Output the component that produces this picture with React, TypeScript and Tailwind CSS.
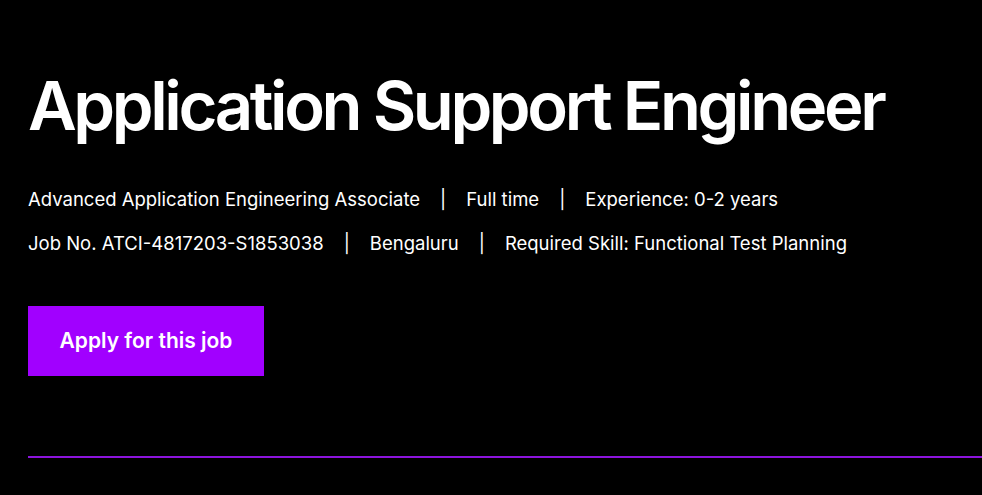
import React from 'react'

const rowOne = ['Advanced Application Engineering Associate', 'Full time', 'Experience: 0-2 years']
const rowTwo = ['Job No. ATCI-4817203-S1853038', 'Bengaluru', 'Required Skill: Functional Test Planning']

function MetaRow({ items }: { items: string[] }) {
    return (
        <div className="flex items-center text-[18.5px] leading-[24px] text-white">
            {items.map((item, i) => (
                <React.Fragment key={item}>
                    {i > 0 && <span className="px-[20px]">|</span>}
                    <span>{item}</span>
                </React.Fragment>
            ))}
        </div>
    )
}

export default function App() {
    return (
        <div className="w-[982px] h-[495px] bg-black overflow-hidden font-['Inter',sans-serif]">
            <div className="pl-[28px] pt-[66px]">
                <h1 className="text-[67px] leading-[80px] font-semibold text-white tracking-[-3.4px]">
                    Application Support Engineer
                </h1>
                <div className="mt-[41px] flex flex-col gap-[20px]">
                    <MetaRow items={rowOne} />
                    <MetaRow items={rowTwo} />
                </div>
                <button className="mt-[51px] w-[236px] h-[70px] bg-[#a100ff] text-white text-[21px] font-semibold">
                    Apply for this job
                </button>
                <div className="mt-[80px] h-[2px] bg-[#8c14dc]" />
            </div>
        </div>
    )
}
